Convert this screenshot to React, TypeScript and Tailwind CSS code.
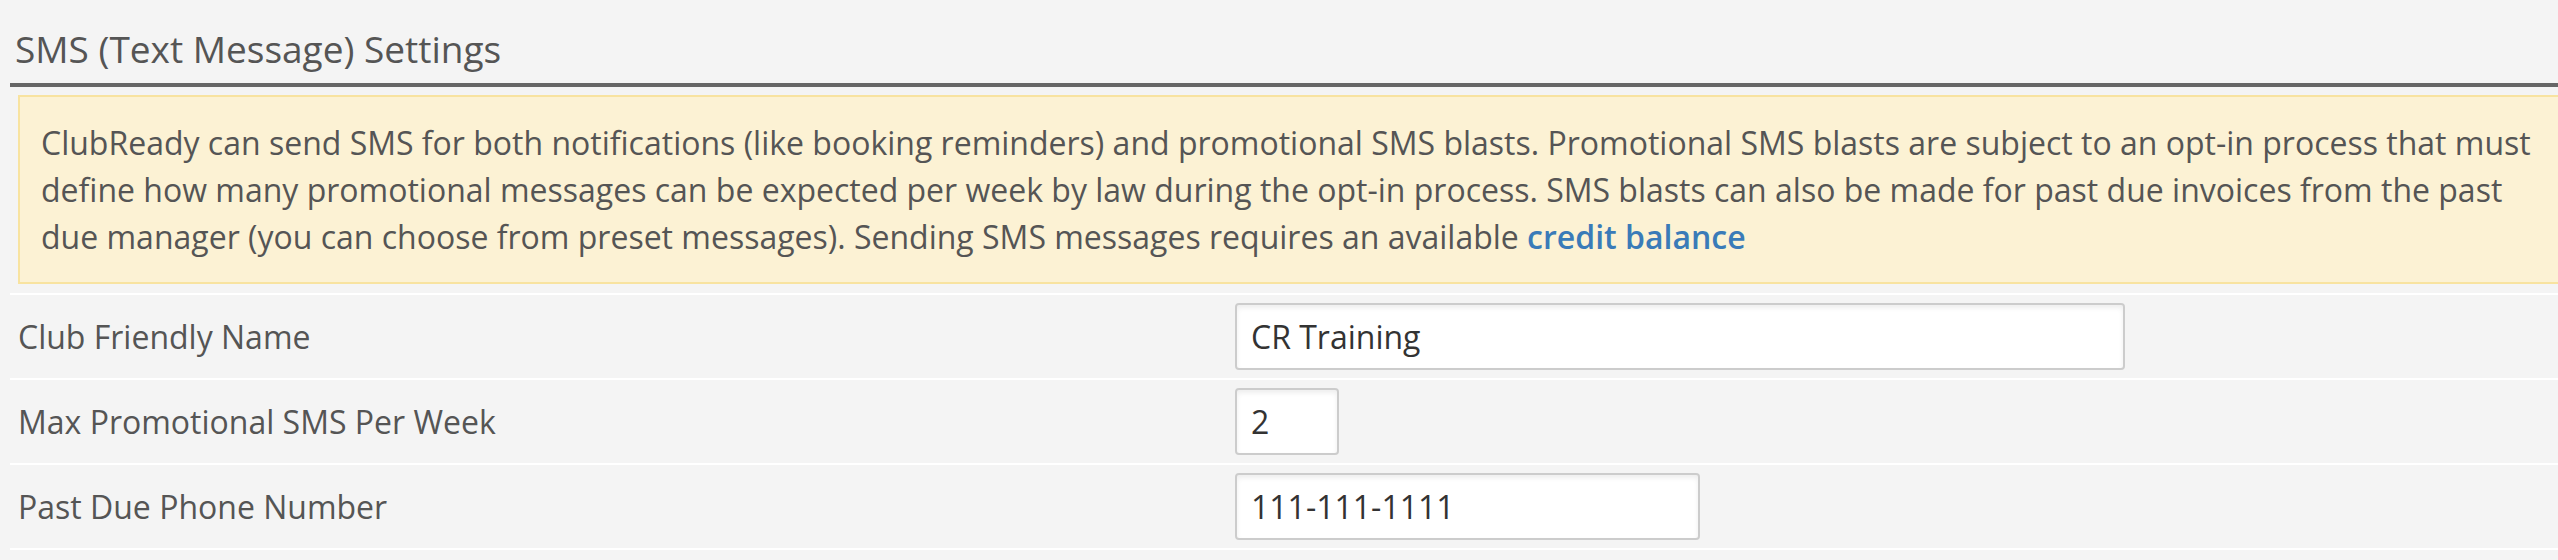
import React from 'react';

interface SettingRow {
  label: string;
  value: string;
  width: string;
}

const rows: SettingRow[] = [
  { label: 'Club Friendly Name', value: 'CR Training', width: 'w-[890px]' },
  { label: 'Max Promotional SMS Per Week', value: '2', width: 'w-[104px]' },
  { label: 'Past Due Phone Number', value: '111-111-1111', width: 'w-[465px]' },
];

const App: React.FC = () => {
  return (
    <div className="min-h-[560px] overflow-hidden bg-[#f4f4f4] font-['Open_Sans',sans-serif] text-[#555]">
      <div className="w-[2600px] pl-[10px]">
        {/* Section header */}
        <h2 className="h-[87px] border-b-4 border-[#666] pl-[5px] pt-[29px] text-[37px] font-normal leading-[40px]">
          SMS (Text Message) Settings
        </h2>

        {/* Info box */}
        <div className="mt-[8px] ml-[8px] border-2 border-[#f8e3a0] bg-[#fcf2d4] px-[21px] py-[22px] text-[32px] leading-[47px]">
          ClubReady can send SMS for both notifications (like booking reminders) and promotional SMS blasts. Promotional SMS blasts are subject to an opt-in process that must
          <br />
          define how many promotional messages can be expected per week by law during the opt-in process. SMS blasts can also be made for past due invoices from the past
          <br />
          due manager (you can choose from preset messages). Sending SMS messages requires an available{' '}
          <a href="#" className="font-semibold text-[#3a7bb8]">credit balance</a>
        </div>

        {/* Settings rows */}
        <div className="mt-[9px]">
          {rows.map((row) => (
            <div key={row.label} className="flex items-center border-t-2 border-white py-[8px]">
              <label className="w-[1225px] pl-[8px] text-[32px]">{row.label}</label>
              <input
                type="text"
                defaultValue={row.value}
                className={`${row.width} h-[67px] rounded-[4px] border-2 border-[#ccc] bg-white px-[14px] text-[32px] text-[#333] shadow-[inset_0_3px_5px_rgba(0,0,0,0.07)] outline-none`}
              />
            </div>
          ))}
          <div className="border-t-2 border-white" />
        </div>
      </div>
    </div>
  );
};

export default App;
